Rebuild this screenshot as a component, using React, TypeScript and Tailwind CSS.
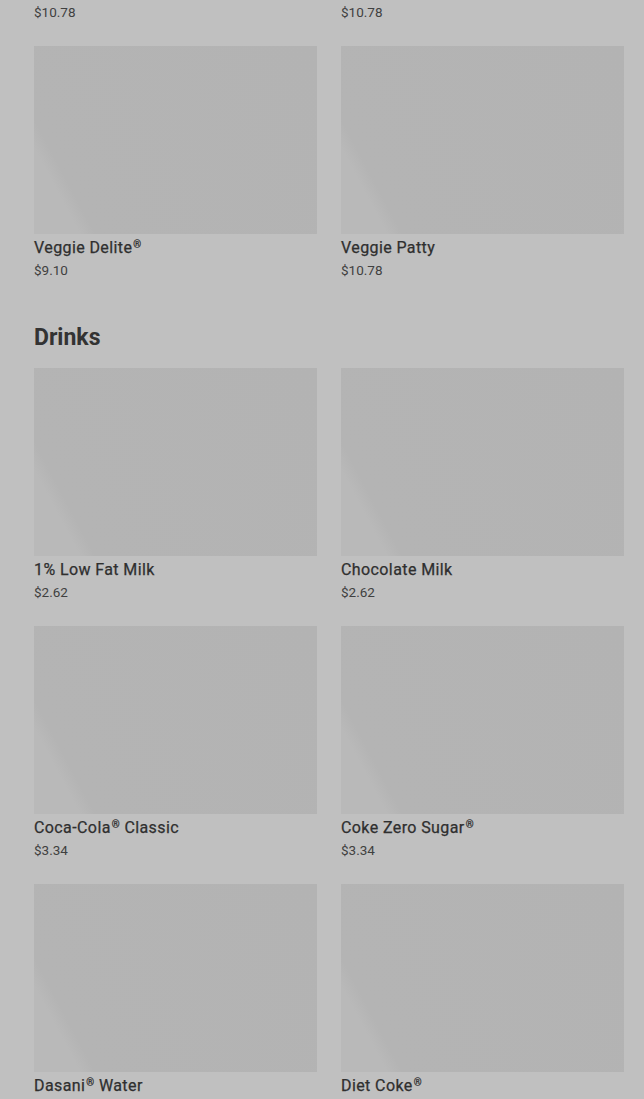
type Item = { name: string; price: string };

const above: Item[] = [
  { name: 'Sweet Onion Chicken Teriyaki', price: '$10.78' },
  { name: 'Steak & Cheese', price: '$10.78' },
  { name: 'Veggie Delite®', price: '$9.10' },
  { name: 'Veggie Patty', price: '$10.78' },
];

const drinks: Item[] = [
  { name: '1% Low Fat Milk', price: '$2.62' },
  { name: 'Chocolate Milk', price: '$2.62' },
  { name: 'Coca-Cola® Classic', price: '$3.34' },
  { name: 'Coke Zero Sugar®', price: '$3.34' },
  { name: 'Dasani® Water', price: '$2.88' },
  { name: 'Diet Coke®', price: '$3.34' },
];

// registered marks render small and raised, as on the menu
function Name({ text }: { text: string }) {
  const parts = text.split('®');
  return (
    <>
      {parts.map((part, i) => (
        <span key={i}>
          {part}
          {i < parts.length - 1 && (
            <span className="relative -top-[5px] ml-[1px] text-[10px] leading-none">®</span>
          )}
        </span>
      ))}
    </>
  );
}

function MenuCard({ item }: { item: Item }) {
  return (
    <div className="flex flex-col">
      <div className="h-[188px] w-full bg-[linear-gradient(62deg,#b9b9b9_0%,#b9b9b9_12%,#b4b4b4_16%,#b3b3b3_100%)]" />
      <p className="mt-[3px] text-[16px] leading-[22px] font-normal tracking-[0.4px] text-[#2f2f2f] whitespace-nowrap [-webkit-text-stroke:0.25px_#2f2f2f]">
        <Name text={item.name} />
      </p>
      <p className="mt-[2px] text-[13.5px] leading-[18px] text-[#404040]">{item.price}</p>
    </div>
  );
}

export default function App() {
  return (
    <div
      className="h-[1099px] overflow-hidden bg-[#c0c0c0]"
      style={{ fontFamily: 'Roboto, "Liberation Sans", sans-serif' }}
    >
      <div className="-mt-[212px] pl-[34px] pr-[20px]">
        <section className="grid grid-cols-2 gap-x-6 gap-y-[25px]">
          {above.map(item => (
            <MenuCard key={item.name} item={item} />
          ))}
        </section>

        <section className="mt-[43px]">
          <h2 className="mb-[14px] text-[23px] leading-8 font-bold text-[#333333]">Drinks</h2>
          <div className="grid grid-cols-2 gap-x-6 gap-y-[25px]">
            {drinks.map(item => (
              <MenuCard key={item.name} item={item} />
            ))}
          </div>
        </section>
      </div>
    </div>
  );
}
